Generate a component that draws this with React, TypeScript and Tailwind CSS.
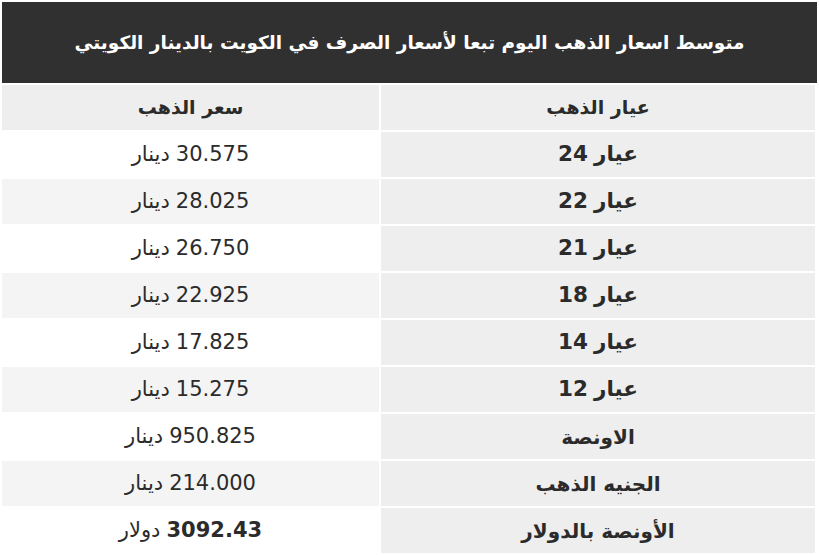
const rows = [
  { karat: "عيار", num: "24", price: "30.575", unit: "دينار" },
  { karat: "عيار", num: "22", price: "28.025", unit: "دينار" },
  { karat: "عيار", num: "21", price: "26.750", unit: "دينار" },
  { karat: "عيار", num: "18", price: "22.925", unit: "دينار" },
  { karat: "عيار", num: "14", price: "17.825", unit: "دينار" },
  { karat: "عيار", num: "12", price: "15.275", unit: "دينار" },
  { karat: "الاونصة", num: "", price: "950.825", unit: "دينار" },
  { karat: "الجنيه الذهب", num: "", price: "214.000", unit: "دينار" },
  { karat: "الأونصة بالدولار", num: "", price: "3092.43", unit: "دولار", bold: true },
];

const App = () => {
  return (
    <div
      dir="rtl"
      className="w-[819px] h-[555px] bg-white p-[2px] overflow-hidden text-[#2b2b2b] font-['DejaVu_Sans',sans-serif]"
    >
      <div className="h-[81px] bg-[#303030] flex items-center justify-center">
        <h1 className="text-white font-bold text-[18.5px]">
          متوسط اسعار الذهب اليوم تبعا لأسعار الصرف في الكويت بالدينار الكويتي
        </h1>
      </div>

      <div className="grid grid-cols-[434px_377px] gap-[2px] px-[2px] pt-[2px]">
        <div className="h-[45px] bg-[#eeeeee] flex items-center justify-center font-bold text-[19px]">
          عيار الذهب
        </div>
        <div className="h-[45px] bg-[#eeeeee] flex items-center justify-center font-bold text-[19px]">
          سعر الذهب
        </div>

        {rows.map((r, i) => (
          <div key={i} className="contents">
            <div
              className={
                "h-[45px] bg-[#eeeeee] flex items-center justify-center gap-[6px] font-bold " +
                (r.num ? "text-[21.5px]" : "text-[20px]")
              }
            >
              <span>{r.karat}</span>
              {r.num && <span>{r.num}</span>}
            </div>
            <div
              className={
                "h-[45px] flex items-center justify-center gap-[6px] text-[21px] " +
                (i % 2 === 1 ? "bg-[#f4f4f4]" : "bg-white")
              }
            >
              <span className={r.bold ? "font-bold" : ""}>{r.price}</span>
              <span>{r.unit}</span>
            </div>
          </div>
        ))}
      </div>
    </div>
  );
};

export default App;
